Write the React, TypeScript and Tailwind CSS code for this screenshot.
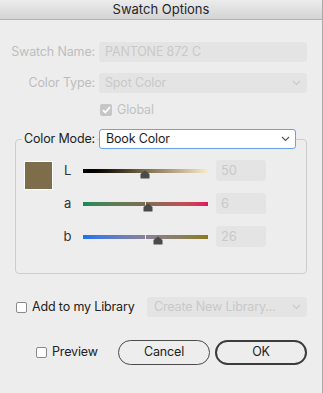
const font = { fontFamily: '"Inter", "Liberation Sans", sans-serif' };

function Chevron({ className = "" }: { className?: string }) {
  return (
    <svg width="9" height="6" viewBox="0 0 9 6" className={className}>
      <path d="M1 1l3.5 3.5L8 1" fill="none" stroke="currentColor" strokeWidth="1.1" />
    </svg>
  );
}

function Thumb() {
  return (
    <svg width="10" height="9" viewBox="0 0 10 9">
      <path d="M5 0.5L9.5 4V8.5H0.5V4Z" fill="#4a4a4a" />
    </svg>
  );
}

type SliderProps = { label: string; value: string; pos: number; gradient: string; tick?: boolean };

function SliderRow({ label, value, pos, gradient, tick }: SliderProps) {
  return (
    <div className="flex items-center h-[21px]">
      <span className="w-[15px] text-center text-[13px] text-[#333]">{label}</span>
      <div className="relative ml-[8px] w-[125px] h-[4px]">
        <div className={`h-full w-full ${gradient}`} />
        {tick && <div className="absolute left-[62px] top-[-1px] h-[6px] w-px bg-white/80" />}
        <div className="absolute top-[1px]" style={{ left: pos - 5 }}>
          <Thumb />
        </div>
      </div>
      <div className="ml-[8px] w-[50px] h-[21px] rounded-[3px] bg-[#e4e4e4] pl-[5px] flex items-center text-[13px] text-[#c9c9c9]">
        {value}
      </div>
    </div>
  );
}

export default function App() {
  return (
    <div
      className="w-[323px] h-[393px] bg-[#ededed] border-r border-[#a8a8a8] overflow-hidden text-[12.5px] tracking-[-0.15px]"
      style={font}
    >
      {/* Title bar */}
      <div className="h-[20px] bg-gradient-to-b from-[#ececec] to-[#d4d4d4] border-b border-[#b3b3b3] flex items-center justify-center text-[13px] tracking-normal text-[#262626]">
        Swatch Options
      </div>

      {/* Swatch name */}
      <div className="flex items-center mt-[22px]">
        <span className="w-[95px] text-right text-[#bdbdbd]">Swatch Name:</span>
        <div className="ml-[4px] w-[208px] h-[20px] rounded-[3px] bg-[#e4e4e4] pl-[6px] flex items-center text-[#c9c9c9]">
          PANTONE 872 C
        </div>
      </div>

      {/* Color type */}
      <div className="flex items-center mt-[11px]">
        <span className="w-[95px] text-right text-[#bdbdbd]">Color Type:</span>
        <div className="ml-[4px] w-[208px] h-[20px] rounded-[3px] bg-[#e4e4e4] pl-[6px] pr-[6px] flex items-center justify-between text-[#c9c9c9]">
          Spot Color
          <Chevron className="text-[#c9c9c9]" />
        </div>
      </div>

      {/* Global */}
      <div className="flex items-center mt-[11px] ml-[100px] h-[12px]">
        <div className="w-[12px] h-[12px] rounded-[2px] bg-[#c6c6c6] flex items-center justify-center">
          <svg width="9" height="8" viewBox="0 0 9 8">
            <path d="M1 4.2l2.3 2.3L8 1.2" fill="none" stroke="#fff" strokeWidth="1.8" />
          </svg>
        </div>
        <span className="ml-[5px] text-[#c2c2c2]">Global</span>
      </div>

      {/* Color mode group */}
      <div className="ml-[15px] w-[292px] h-[135px] mt-[23px] rounded-[4px] border border-[#cdcdcd]">
        <div className="flex items-center -mt-[11px] h-[20px]">
          <span className="ml-[6px] px-[2px] bg-[#ededed] text-[#222]">Color Mode:</span>
          <div className="ml-auto mr-[10px] w-[197px] h-[20px] rounded-[3px] bg-white border border-[#6aa2e8] pl-[6px] pr-[5px] flex items-center justify-between text-[#1e1e1e]">
            Book Color
            <Chevron className="text-[#555]" />
          </div>
        </div>
        <div className="flex items-start mt-[11px] ml-[8px]">
          <div className="mt-px w-[29px] h-[29px] border border-white bg-[#7d6d4b]" />
          <div className="ml-[7px] flex flex-col gap-[12px]">
            <SliderRow
              label="L"
              value="50"
              pos={62}
              gradient="bg-gradient-to-r from-[#000000] via-[#7d6d4b] to-[#fbeccb]"
            />
            <SliderRow
              label="a"
              value="6"
              pos={65}
              tick
              gradient="bg-gradient-to-r from-[#0a8c57] via-[#7b6d52] to-[#e3105a]"
            />
            <SliderRow
              label="b"
              value="26"
              pos={75}
              tick
              gradient="bg-gradient-to-r from-[#1a72f0] via-[#8a8098] to-[#8d7a10]"
            />
          </div>
        </div>
      </div>

      {/* Library */}
      <div className="flex items-center mt-[23px] h-[20px]">
        <div className="ml-[16px] w-[11px] h-[11px] rounded-[2px] border border-[#8a8a8a] bg-white" />
        <span className="ml-[5px] text-[#222]">Add to my Library</span>
        <div className="ml-auto mr-[15px] w-[160px] h-[20px] rounded-[3px] bg-[#e4e4e4] pl-[7px] pr-[6px] flex items-center justify-between text-[#c9c9c9]">
          Create New Library...
          <Chevron className="text-[#c9c9c9]" />
        </div>
      </div>

      {/* Buttons */}
      <div className="flex items-center mt-[23px] h-[25px]">
        <div className="ml-[36px] w-[11px] h-[11px] rounded-[2px] border border-[#8a8a8a] bg-white" />
        <span className="ml-[5px] text-[#222]">Preview</span>
        <button className="ml-auto w-[92px] h-[25px] rounded-full border border-[#4a4a4a] text-[#222]">
          Cancel
        </button>
        <button className="ml-[5px] mr-[15px] w-[92px] h-[25px] rounded-full border-2 border-[#3c3c3c] text-[#222]">
          OK
        </button>
      </div>
    </div>
  );
}
